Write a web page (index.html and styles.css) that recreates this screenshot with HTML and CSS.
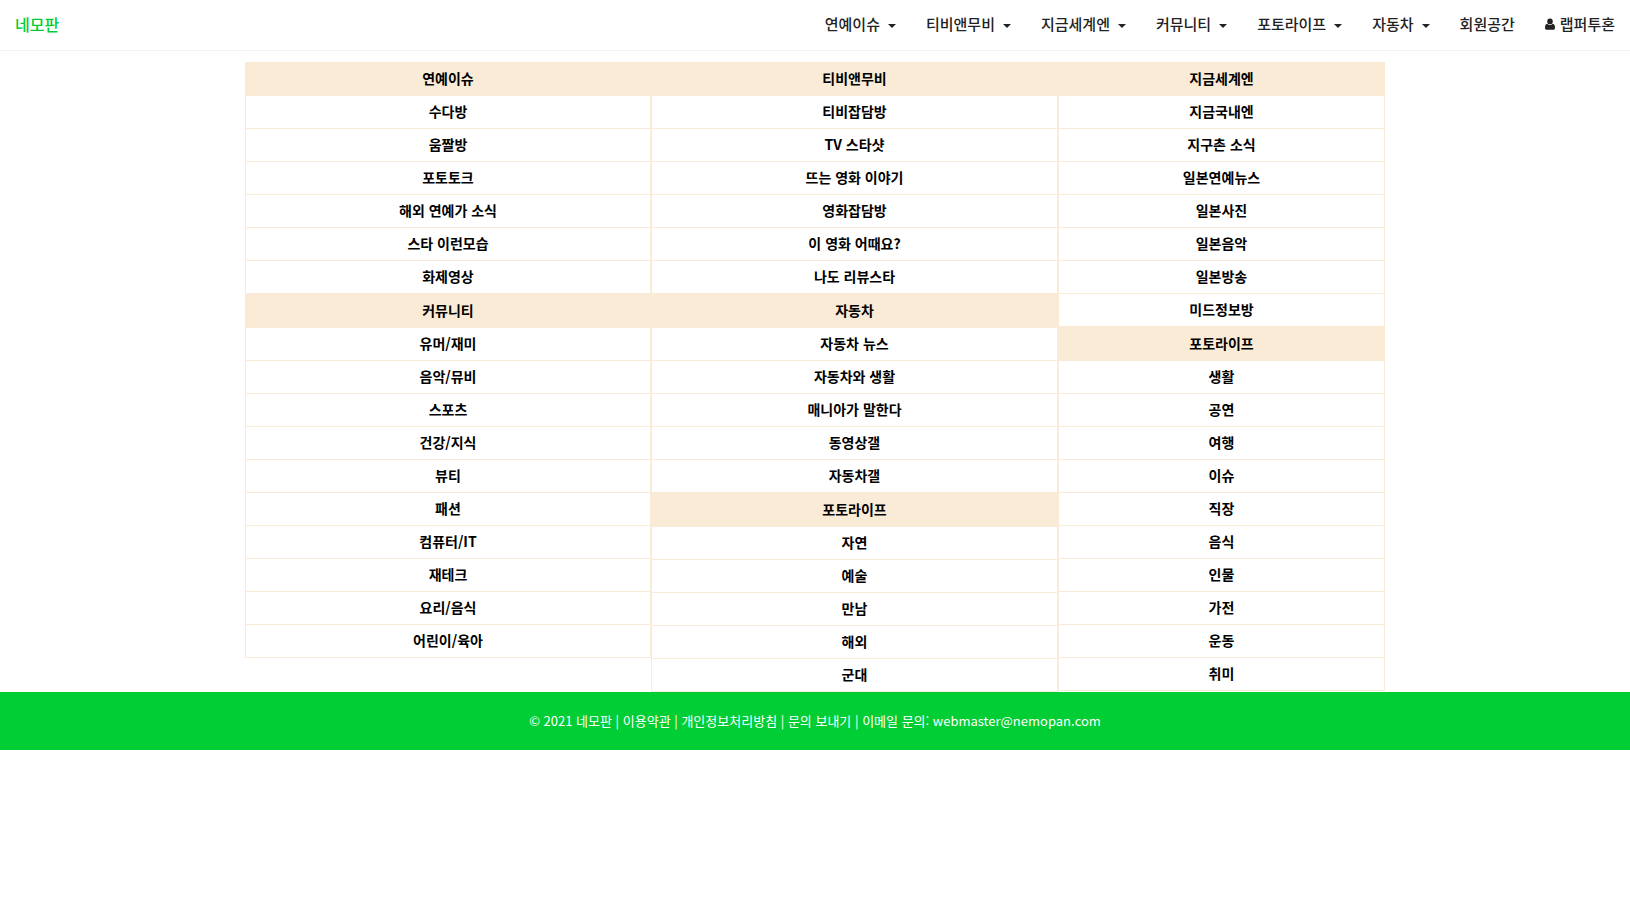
FILE: index.html
```html
<!DOCTYPE html>
<html lang="ko">

<head>
    <meta charset="utf-8">
    <meta name="viewport" content="width=device-width, initial-scale=1">
    <title>네모판</title>
    <link rel="stylesheet" href="styles.css">
</head>

<body>
    <header class="navbar">
        <a class="brand" href="#">네모판</a>
        <nav class="menu">
            <a href="#">연예이슈<span class="caret"></span></a>
            <a href="#">티비앤무비<span class="caret"></span></a>
            <a href="#">지금세계엔<span class="caret"></span></a>
            <a href="#">커뮤니티<span class="caret"></span></a>
            <a href="#">포토라이프<span class="caret"></span></a>
            <a href="#">자동차<span class="caret"></span></a>
            <a href="#">회원공간</a>
            <a href="#"><svg class="user" viewBox="0 0 10 12" aria-hidden="true"><path d="M5 0.5a2.8 2.9 0 0 1 2.8 2.9A2.8 2.9 0 0 1 5 6.3a2.8 2.9 0 0 1-2.8-2.9A2.8 2.9 0 0 1 5 0.5zM2.3 5.7C3 6.5 4 7 5 7s2-.5 2.7-1.3C9.500 5.900 10 7.800 10 9.700 10 11 9.200 11.800 8.200 11.800H1.800C.8 11.800 0 11 0 9.700 0 7.800.5 5.900 2.300 5.700z"/></svg>랩퍼투혼</a>
        </nav>
    </header>

    <main class="board">
        <div class="column">
            <h2>연예이슈</h2>
            <ul>
                <li><a href="#">수다방</a></li>
                <li><a href="#">움짤방</a></li>
                <li><a href="#">포토토크</a></li>
                <li><a href="#">해외 연예가 소식</a></li>
                <li><a href="#">스타 이런모습</a></li>
                <li><a href="#">화제영상</a></li>
            </ul>
            <h2>커뮤니티</h2>
            <ul>
                <li><a href="#">유머/재미</a></li>
                <li><a href="#">음악/뮤비</a></li>
                <li><a href="#">스포츠</a></li>
                <li><a href="#">건강/지식</a></li>
                <li><a href="#">뷰티</a></li>
                <li><a href="#">패션</a></li>
                <li><a href="#">컴퓨터/IT</a></li>
                <li><a href="#">재테크</a></li>
                <li><a href="#">요리/음식</a></li>
                <li><a href="#">어린이/육아</a></li>
            </ul>
        </div>

        <div class="column">
            <h2>티비앤무비</h2>
            <ul>
                <li><a href="#">티비잡담방</a></li>
                <li><a href="#">TV 스타샷</a></li>
                <li><a href="#">뜨는 영화 이야기</a></li>
                <li><a href="#">영화잡담방</a></li>
                <li><a href="#">이 영화 어때요?</a></li>
                <li><a href="#">나도 리뷰스타</a></li>
            </ul>
            <h2>자동차</h2>
            <ul>
                <li><a href="#">자동차 뉴스</a></li>
                <li><a href="#">자동차와 생활</a></li>
                <li><a href="#">매니아가 말한다</a></li>
                <li><a href="#">동영상갤</a></li>
                <li><a href="#">자동차갤</a></li>
            </ul>
            <h2>포토라이프</h2>
            <ul>
                <li><a href="#">자연</a></li>
                <li><a href="#">예술</a></li>
                <li><a href="#">만남</a></li>
                <li><a href="#">해외</a></li>
                <li><a href="#">군대</a></li>
            </ul>
        </div>

        <div class="column">
            <h2>지금세계엔</h2>
            <ul>
                <li><a href="#">지금국내엔</a></li>
                <li><a href="#">지구촌 소식</a></li>
                <li><a href="#">일본연예뉴스</a></li>
                <li><a href="#">일본사진</a></li>
                <li><a href="#">일본음악</a></li>
                <li><a href="#">일본방송</a></li>
                <li><a href="#">미드정보방</a></li>
            </ul>
            <h2>포토라이프</h2>
            <ul>
                <li><a href="#">생활</a></li>
                <li><a href="#">공연</a></li>
                <li><a href="#">여행</a></li>
                <li><a href="#">이슈</a></li>
                <li><a href="#">직장</a></li>
                <li><a href="#">음식</a></li>
                <li><a href="#">인물</a></li>
                <li><a href="#">가전</a></li>
                <li><a href="#">운동</a></li>
                <li><a href="#">취미</a></li>
            </ul>
        </div>
    </main>

    <footer class="footer">
        © 2021 네모판 | <a href="#">이용약관</a> | <a href="#">개인정보처리방침</a> | <a href="#">문의 보내기</a> | 이메일 문의: <a href="mailto:webmaster@nemopan.com">webmaster@nemopan.com</a>
    </footer>
</body>

</html>
```
FILE: styles.css
```css
* {
    box-sizing: border-box;
}

body {
    margin: 0;
    background-color: #fff;
    color: #000;
    font-family: "Noto Sans CJK KR", sans-serif;
    font-size: 14px;
}

a {
    color: inherit;
    text-decoration: none;
}

.navbar {
    display: flex;
    justify-content: space-between;
    align-items: center;
    padding: 0 15px 2px;
    border-bottom: 1px solid #f2f2f2;
    line-height: 48px;
}

.brand {
    color: #00ce34;
    font-size: 16px;
    font-weight: 500;
}

.menu {
    display: flex;
    gap: 30px;
    color: #222;
    font-size: 15px;
    font-weight: 500;
}

.menu a {
    display: flex;
    align-items: center;
}

.caret {
    margin-left: 8px;
    margin-top: 4px;
    border-top: 4px solid;
    border-right: 4px solid transparent;
    border-left: 4px solid transparent;
}

.user {
    width: 10px;
    height: 12px;
    margin-right: 5px;
    fill: #222;
}

.board {
    display: grid;
    grid-template-columns: 406fr 407fr 327fr;
    align-items: start;
    max-width: 1140px;
    margin: 11px auto 0;
}

.column h2 {
    margin: 0;
    padding-bottom: 2px;
    background-color: #faebd7;
    font-size: 14px;
    font-weight: 700;
    line-height: 32px;
    text-align: center;
}

.column ul {
    margin: 0;
    padding: 0;
    list-style-type: none;
}

.column li {
    border: 1px solid #faebd7;
    border-top: none;
    font-weight: 700;
    line-height: 30px;
    text-align: center;
}

.column li a {
    display: block;
    padding-bottom: 2px;
}

.column a:hover {
    background-color: #fdf6ec;
}

.footer {
    padding: 18px 15px;
    background-color: #00ce34;
    color: #fff;
    font-size: 13px;
    line-height: 22px;
    text-align: center;
}
```
